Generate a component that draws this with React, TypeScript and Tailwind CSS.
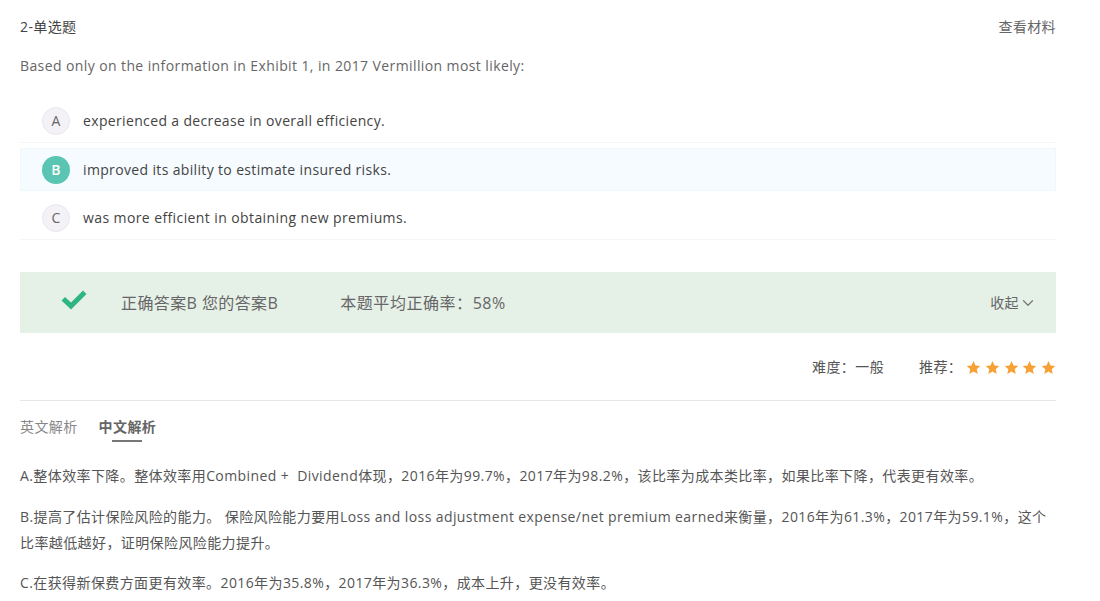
import { ChevronDown } from "lucide-react";

const FONT = "font-['Open_Sans','Noto_Sans_CJK_SC',sans-serif]";

function Star() {
  return (
    <svg viewBox="0 0 24 24" className="w-[15px] h-[15px] fill-[#f7a135]">
      <path d="M12 1.5l3.2 7.1 7.6.8-5.7 5.2 1.6 7.6L12 18.3l-6.7 3.9 1.6-7.6-5.7-5.2 7.6-.8z" />
    </svg>
  );
}

function Option({
  letter,
  text,
  correct,
  className,
}: {
  letter: string;
  text: string;
  correct?: boolean;
  className: string;
}) {
  return (
    <div className={`flex items-center text-[14px] text-[#444] ${className}`}>
      <span
        className={
          correct
            ? "w-[28px] h-[28px] rounded-full bg-[#5ac5b2] text-white font-semibold flex items-center justify-center"
            : "w-[28px] h-[28px] rounded-full bg-[#f4f2f6] border border-[#e8e8ec] text-[#666] flex items-center justify-center"
        }
      >
        {letter}
      </span>
      <span className="ml-[13px]">{text}</span>
    </div>
  );
}

export default function App() {
  return (
    <div className={`${FONT} w-[1100px] h-[601px] overflow-hidden bg-white pl-[20px] text-[#666] tracking-[0.4px]`}>
      <div className="w-[1036px]">
        <div className="flex justify-between items-center h-[20px] mt-[17px] text-[14px] leading-[20px]">
          <span className="text-[#444]">2-单选题</span>
          <span className="text-[#666]">查看材料</span>
        </div>
        <p className="mt-[19px] text-[14px] leading-[20px] text-[#666]">
          Based only on the information in Exhibit 1, in 2017 Vermillion most likely:
        </p>

        <div className="mt-[21px]">
          <Option
            letter="A"
            text="experienced a decrease in overall efficiency."
            className="h-[46px] pl-[22px] pt-[2px] tracking-[0.35px] border-b border-[#f6f6f6] mb-[5px]"
          />
          <Option
            letter="B"
            text="improved its ability to estimate insured risks."
            correct
            className="h-[43px] pl-[21px] tracking-[0.35px] bg-[#f5fbff] border border-[#eef7fb] mb-[3px]"
          />
          <Option
            letter="C"
            text="was more efficient in obtaining new premiums."
            className="h-[46px] pl-[22px] pt-[2px] border-b border-[#f6f6f6]"
          />
        </div>

        <div className="mt-[32px] h-[61px] bg-[#e5f0e7] flex items-center text-[#666]">
          <svg viewBox="0 0 26 20" className="ml-[41px] mb-[6px] w-[26px] h-[20px] fill-[#2fb57f]">
            <path d="M0.5 10.5L4 7l6 5.6L22 0.5l3.5 3.5L10 19.5z" />
          </svg>
          <span className="ml-[34px] text-[16px]">正确答案B 您的答案B</span>
          <span className="ml-[62px] text-[16px] tracking-[0.55px]">本题平均正确率：58%</span>
          <span className="ml-auto mr-[19px] flex items-center text-[14px]">
            收起
            <ChevronDown className="w-[18px] h-[18px] text-[#777]" strokeWidth={1.6} />
          </span>
        </div>

        <div className="mt-[24px] h-[20px] flex items-center justify-end text-[14px] leading-[20px] text-[#555]">
          <span>难度：一般</span>
          <span className="ml-[35px]">推荐：</span>
          <span className="ml-[4px] flex gap-[3.7px]">
            <Star />
            <Star />
            <Star />
            <Star />
            <Star />
          </span>
        </div>

        <div className="mt-[23px] border-t border-[#e6e6e6]" />

        <div className="mt-[16px] flex gap-[21px] text-[14px] leading-[20px]">
          <span className="text-[#888]">英文解析</span>
          <span className="relative font-bold text-[#666]">
            中文解析
            <span className="absolute left-[13px] top-[23px] w-[30px] h-[2px] bg-[#777]" />
          </span>
        </div>

        <div className="mt-[26px] text-[14px] leading-[26px] text-[#555]">
          <p>A.整体效率下降。整体效率用Combined + &nbsp;Dividend体现，2016年为99.7%，2017年为98.2%，该比率为成本类比率，如果比率下降，代表更有效率。</p>
          <p className="mt-[15px]">B.提高了估计保险风险的能力。 保险风险能力要用Loss and loss adjustment expense/net premium earned来衡量，2016年为61.3%，2017年为59.1%，这个比率越低越好，证明保险风险能力提升。</p>
          <p className="mt-[14px]">C.在获得新保费方面更有效率。2016年为35.8%，2017年为36.3%，成本上升，更没有效率。</p>
        </div>
      </div>
    </div>
  );
}
